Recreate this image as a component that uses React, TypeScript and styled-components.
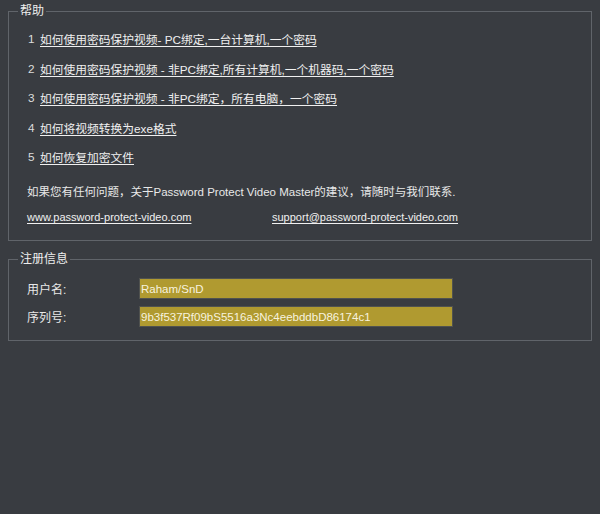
import styled, { createGlobalStyle } from "styled-components";

const GlobalStyle = createGlobalStyle`
  html, body {
    margin: 0;
    padding: 0;
    background: #393c41;
  }
  body {
    font-family: "Liberation Sans", "Noto Sans CJK SC", sans-serif;
    font-size: 11.5px;
    color: #e8e8e8;
  }
`;

const helpLinks = [
  "如何使用密码保护视频- PC绑定,一台计算机,一个密码",
  "如何使用密码保护视频 - 非PC绑定,所有计算机,一个机器码,一个密码",
  "如何使用密码保护视频 - 非PC绑定，所有电脑，一个密码",
  "如何将视频转换为exe格式",
  "如何恢复加密文件",
];

const App = () => {
  return (
    <>
      <GlobalStyle />
      <StyledPage>
        <Group>
          <Legend>帮助</Legend>
          <HelpList>
            {helpLinks.map((text, i) => (
              <HelpRow key={i}>
                <span className="num">{i + 1}</span>
                <Link href="#">{text}</Link>
              </HelpRow>
            ))}
          </HelpList>
          <Contact>
            如果您有任何问题，关于Password Protect Video Master的建议，请随时与我们联系.
          </Contact>
          <LinksRow>
            <Link href="#">www.password-protect-video.com</Link>
            <Link href="#">support@password-protect-video.com</Link>
          </LinksRow>
        </Group>

        <Group $compact>
          <Legend>注册信息</Legend>
          <FormRow>
            <Label>用户名:</Label>
            <Field readOnly value="Raham/SnD" />
          </FormRow>
          <FormRow>
            <Label>序列号:</Label>
            <Field readOnly value="9b3f537Rf09bS5516a3Nc4eebddbD86174c1" />
          </FormRow>
        </Group>
      </StyledPage>
    </>
  );
};

const StyledPage = styled.div`
  display: flex;
  flex-direction: column;
  gap: 11px;
  padding: 4px 8px 0 8px;
  width: 584px;
`;

const Group = styled.fieldset<{ $compact?: boolean }>`
  margin: 0;
  min-width: 0;
  border: 1px solid #60646a;
  padding: ${(p) => (p.$compact ? "12px 18px 13px" : "6px 18px 13px")};
  display: flex;
  flex-direction: column;
`;

const Legend = styled.legend`
  margin-left: -9px;
  padding: 0 2px;
  font-size: 12px;
  line-height: 14px;
  color: #eeeeee;
`;

const HelpList = styled.div`
  display: flex;
  flex-direction: column;
  font-size: 11.75px;
`;

const HelpRow = styled.div`
  height: 29.5px;
  display: flex;
  align-items: center;
  .num {
    width: 12px;
    margin-left: 1px;
    color: #dcdcdc;
  }
`;

const Link = styled.a`
  color: #f0f0f0;
  text-decoration: underline;
  text-underline-offset: 2px;
`;

const Contact = styled.div`
  margin-top: 10.5px;
  line-height: 20px;
  white-space: nowrap;
`;

const LinksRow = styled.div`
  margin-top: 5px;
  line-height: 20px;
  font-size: 11px;
  display: grid;
  grid-template-columns: 245px auto;
  justify-items: start;
`;

const FormRow = styled.div`
  display: flex;
  align-items: center;
  & + & {
    margin-top: 7px;
  }
`;

const Label = styled.span`
  width: 112px;
  font-size: 12px;
`;

const Field = styled.input`
  box-sizing: border-box;
  width: 314px;
  height: 21px;
  margin: 0;
  padding: 0 0 0 1px;
  border: 1px solid #50524f;
  background: #b09a30;
  color: #f7f2df;
  font-family: "Liberation Sans", sans-serif;
  font-size: 11.5px;
  outline: none;
`;

export default App;
